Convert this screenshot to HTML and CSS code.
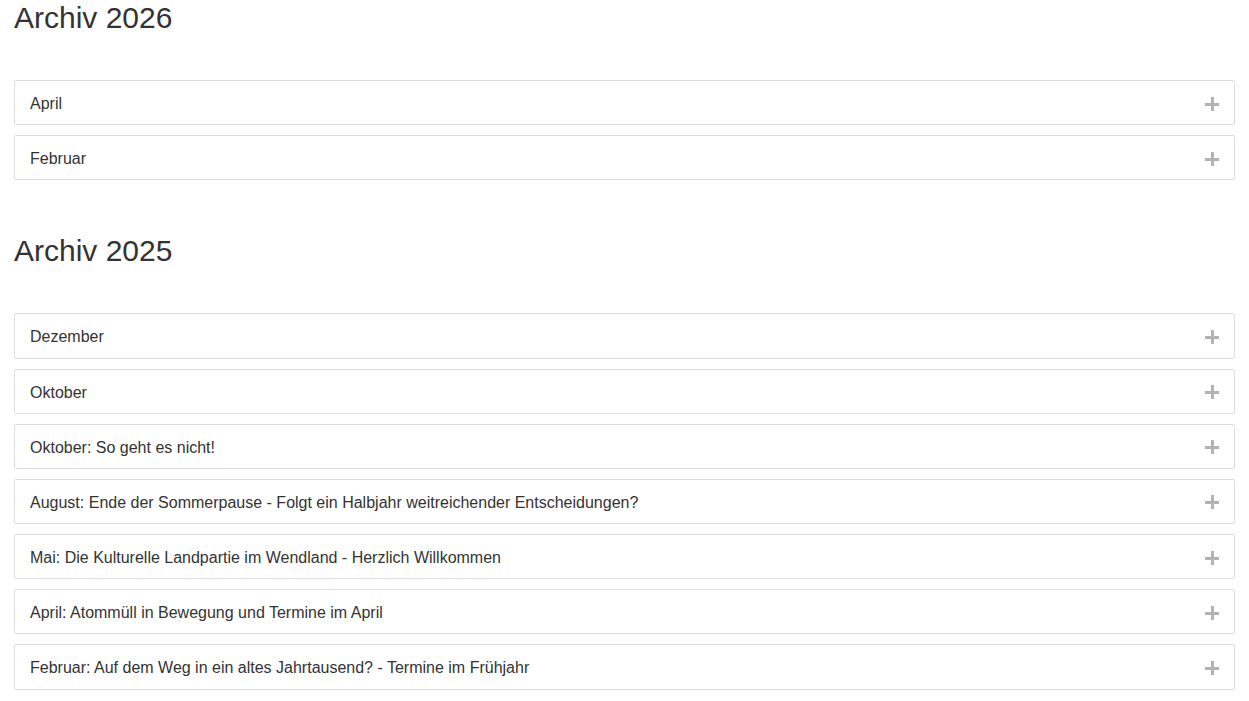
FILE: index.html
```html
<!DOCTYPE html>
<html lang="de">
<head>
<meta charset="utf-8">
<title>Archiv</title>
<link rel="stylesheet" href="styles.css">
</head>
<body>
<section class="archive">
  <h1 class="archive-title">Archiv 2026</h1>
  <div class="panels">
    <div class="panel"><span class="panel-title">April</span><span class="plus"></span></div>
    <div class="panel"><span class="panel-title">Februar</span><span class="plus"></span></div>
  </div>
</section>
<section class="archive">
  <h1 class="archive-title">Archiv 2025</h1>
  <div class="panels">
    <div class="panel"><span class="panel-title">Dezember</span><span class="plus"></span></div>
    <div class="panel"><span class="panel-title">Oktober</span><span class="plus"></span></div>
    <div class="panel"><span class="panel-title">Oktober: So geht es nicht!</span><span class="plus"></span></div>
    <div class="panel"><span class="panel-title">August: Ende der Sommerpause - Folgt ein Halbjahr weitreichender Entscheidungen?</span><span class="plus"></span></div>
    <div class="panel"><span class="panel-title">Mai: Die Kulturelle Landpartie im Wendland - Herzlich Willkommen</span><span class="plus"></span></div>
    <div class="panel"><span class="panel-title">April: Atommüll in Bewegung und Termine im April</span><span class="plus"></span></div>
    <div class="panel"><span class="panel-title">Februar: Auf dem Weg in ein altes Jahrtausend? - Termine im Frühjahr</span><span class="plus"></span></div>
  </div>
</section>
</body>
</html>
```
FILE: styles.css
```css
html, body {
  margin: 0;
  padding: 0;
  background: #fff;
}
body {
  font-family: "Liberation Sans", Arial, sans-serif;
  color: #333;
  padding: 0 14px;
}
.archive {
  display: flex;
  flex-direction: column;
}
.archive + .archive {
  margin-top: 53px;
}
.archive-title {
  margin: 1px 0 46px;
  font-size: 30px;
  font-weight: 400;
  line-height: 33px;
  color: #333;
}
.panels {
  display: flex;
  flex-direction: column;
  gap: 10px;
}
.panel {
  display: flex;
  align-items: center;
  justify-content: space-between;
  border: 1px solid #ddd;
  border-radius: 2px;
  padding: 11px 15px 9px;
  background: #fff;
}
.panel-title {
  font-size: 16px;
  line-height: 23.17px;
  color: #333;
}
.plus {
  position: relative;
  width: 14px;
  height: 14px;
  flex: none;
}
.plus::before,
.plus::after {
  content: "";
  position: absolute;
  background: #b3b3b3;
}
.plus::before {
  left: 0;
  right: 0;
  top: 6px;
  height: 3px;
}
.plus::after {
  top: 0;
  bottom: 0;
  left: 6px;
  width: 3px;
}
```
